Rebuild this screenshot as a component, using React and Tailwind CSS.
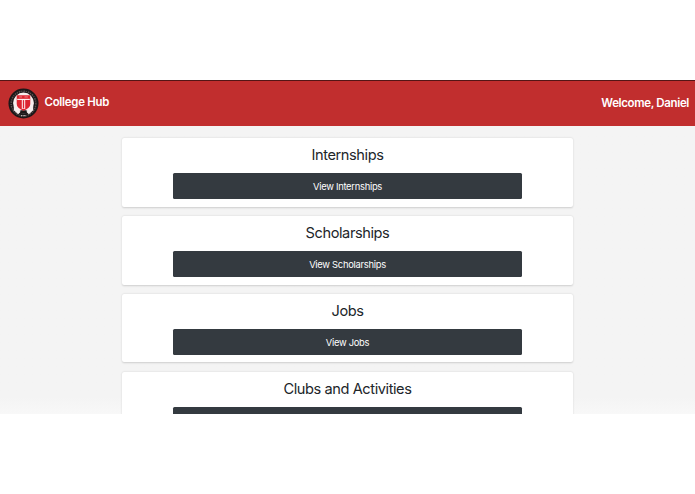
import React from 'react';

const sections = [
    { title: 'Internships', action: 'View Internships' },
    { title: 'Scholarships', action: 'View Scholarships' },
    { title: 'Jobs', action: 'View Jobs' },
    { title: 'Clubs and Activities', action: '' },
];

function Logo() {
    return (
        <svg viewBox="0 0 64 64" className="h-[31px] w-[31px] shrink-0" aria-hidden="true">
            <circle cx="32" cy="32" r="31" fill="#1c1718" />
            <circle cx="32" cy="32" r="25.5" fill="none" stroke="#a39696" strokeWidth="3" strokeDasharray="1.6 1.5 2.3 1.2" strokeOpacity="0.45" pathLength="110" />
            <circle cx="32" cy="31" r="21.5" fill="#f6eeee" />
            <path d="M23 48 L27 46 H37 L41 48 L40 53 H24 Z" fill="#1c1718" />
            <path d="M12 38 L26 49 L21 54 L12 46 Z M52 38 L38 49 L43 54 L52 46 Z" fill="#f6eeee" />
            <path d="M18 15 H46 V33 Q46 41 32 47 Q18 41 18 33 Z" fill="#dc2530" />
            <path d="M19 23.5 H45" stroke="#fff" strokeWidth="2.2" />
            <path d="M28.5 24 H35.5 V43 H28.5 Z" fill="#fff" />
            <path d="M30.5 25 H33.5 V42 H30.5 Z" fill="#dc2530" />
            <path d="M23 18.5 H29 M34 18.5 H41" stroke="#f2a5a8" strokeWidth="1.5" />
            <path d="M27 57 H37" stroke="#c8bcbc" strokeWidth="3" strokeDasharray="2 1.2" />
        </svg>
    );
}

function Navbar() {
    return (
        <header className="flex h-[46px] shrink-0 items-center justify-between border-t border-[#541515] bg-[#c12e2e] pl-2 pr-1.5 text-white">
            <div className="flex items-center gap-[5.5px]">
                <Logo />
                <span className="-mt-px text-[11.4px] font-semibold leading-none tracking-[-0.25px]">College Hub</span>
            </div>
            <span className="text-[11.5px] font-semibold leading-none tracking-[-0.35px]">Welcome, Daniel</span>
        </header>
    );
}

function SectionCard({ title, action }) {
    return (
        <section className="flex h-[68.4px] shrink-0 flex-col items-center rounded-[2px] bg-white pt-2 shadow-[0_0.5px_2px_rgba(0,0,0,0.16)]">
            <h2 className="text-[14.6px] leading-[18px] tracking-[-0.42px] text-[#212529]">{title}</h2>
            <button className="mt-[9px] h-[26px] w-[349px] shrink-0 rounded-[1.5px] bg-[#343a40] pt-px text-[9.4px] leading-none tracking-[-0.28px] text-white">
                {action}
            </button>
        </section>
    );
}

export default function App() {
    return (
        <div className="h-[494px] overflow-hidden bg-white py-20 font-['Inter','Liberation_Sans',sans-serif]">
            <div className="flex h-[334px] flex-col overflow-hidden bg-linear-to-b from-[#f4f4f4] from-95% to-[#f8f8f8]">
                <Navbar />
                <main className="mx-auto flex w-[451px] flex-col gap-[9.4px] pt-[12.4px]">
                    {sections.map((section) => (
                        <SectionCard key={section.title} {...section} />
                    ))}
                </main>
            </div>
        </div>
    );
}
